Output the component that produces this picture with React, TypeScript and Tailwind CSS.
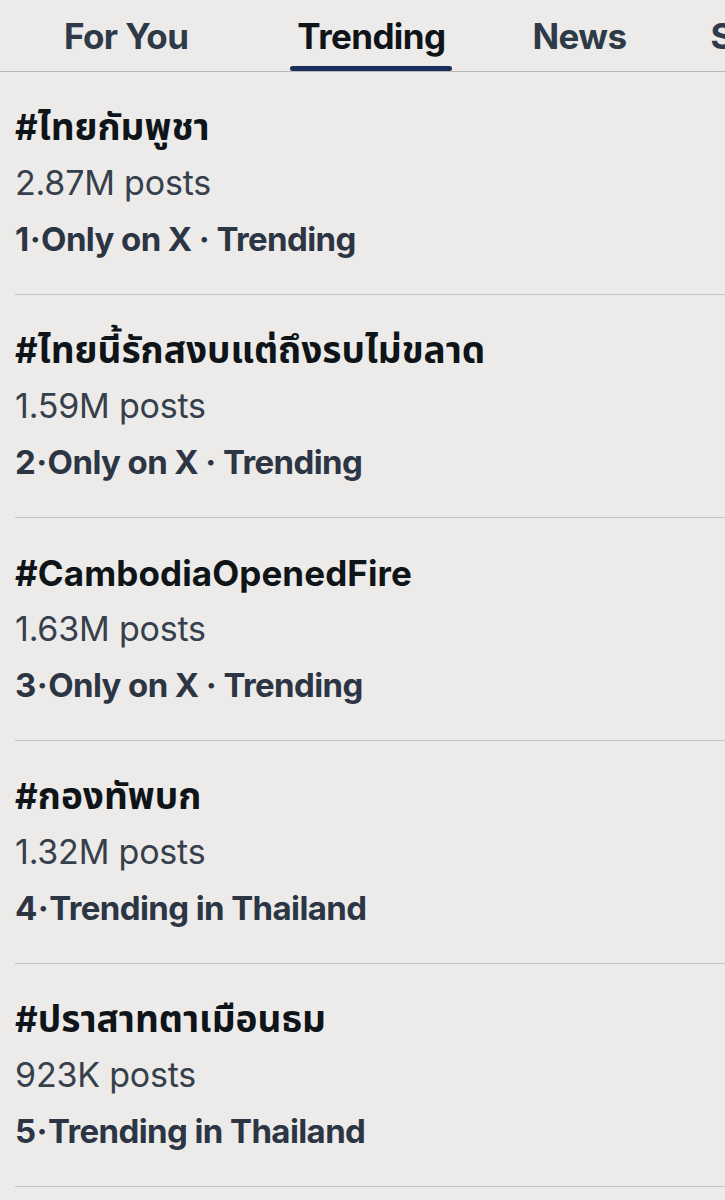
const trends = [
  { tag: 'ไทยกัมพูชา', thai: true, posts: '2.87M posts', rank: '1', meta: 'Only on X · Trending' },
  { tag: 'ไทยนี้รักสงบแต่ถึงรบไม่ขลาด', thai: true, posts: '1.59M posts', rank: '2', meta: 'Only on X · Trending' },
  { tag: 'CambodiaOpenedFire', thai: false, posts: '1.63M posts', rank: '3', meta: 'Only on X · Trending' },
  { tag: 'กองทัพบก', thai: true, posts: '1.32M posts', rank: '4', meta: 'Trending in Thailand' },
  { tag: 'ปราสาทตาเมือนธม', thai: true, posts: '923K posts', rank: '5', meta: 'Trending in Thailand' },
]

const tabs = [
  { label: 'For You', ml: 'ml-[64px]' },
  { label: 'Trending', ml: 'ml-[109px]' },
  { label: 'News', ml: 'ml-[87px]' },
  { label: 'Sports', ml: 'ml-[84px]' },
]

export default function App() {
  return (
    <div
      className="min-h-[1200px] w-[725px] overflow-hidden bg-[#ecebe9] text-[#0f1419]"
      style={{ fontFamily: 'Inter, "Noto Sans", "Noto Sans Thai", "DejaVu Sans", sans-serif' }}
    >
      <div className="flex h-[72px] border-b border-[#b9b8b6] whitespace-nowrap">
        {tabs.map(t => {
          const active = t.label === 'Trending'
          return (
            <div key={t.label} className={`relative flex shrink-0 justify-center ${t.ml}`}>
              <div
                className={`pt-[10px] text-[35px] font-bold tracking-[-0.6px] ${
                  active ? 'text-[#0f1419]' : 'text-[#2e3a48]'
                }`}
              >
                {t.label}
              </div>
              {active && (
                <div className="absolute bottom-0 left-[-7px] right-[-7px] h-[5px] rounded-full bg-[#1a2d5c]" />
              )}
            </div>
          )
        })}
      </div>
      {trends.map(item => (
        <div key={item.rank} className="ml-[15px] border-b border-[#c4c3c1] py-[27px]">
          <div className="h-[56px] whitespace-nowrap text-[35px] leading-[56px] font-bold tracking-[0.1px]">
            #{item.thai ? <span className="text-[37px] tracking-normal">{item.tag}</span> : item.tag}
          </div>
          <div className="h-[56px] text-[34px] leading-[56px] tracking-[-0.2px] text-[#36404c]">{item.posts}</div>
          <div className="h-[56px] text-[33px] leading-[56px] font-bold tracking-[-0.6px] text-[#2c3544]">
            {item.rank}
            <span className="mx-[1px]">·</span>
            {item.meta}
          </div>
        </div>
      ))}
    </div>
  )
}
